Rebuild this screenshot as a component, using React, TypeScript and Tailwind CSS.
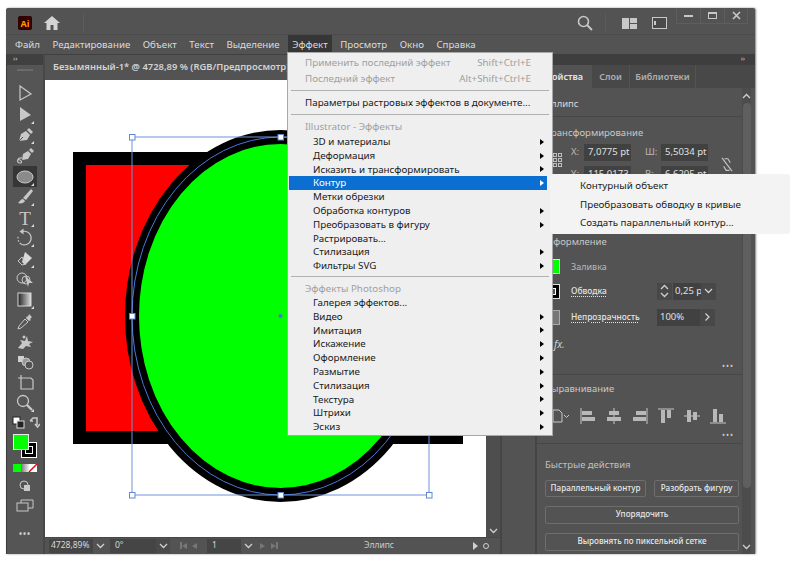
import React from 'react';

const effects = [
  ['3D и материалы', true],
  ['Деформация', true],
  ['Исказить и трансформировать', true],
  ['Контур', true, true],
  ['Метки обрезки', false],
  ['Обработка контуров', true],
  ['Преобразовать в фигуру', true],
  ['Растрировать...', false],
  ['Стилизация', true],
  ['Фильтры SVG', true],
] as [string, boolean, boolean?][];

const photoshop = [
  ['Галерея эффектов...', false],
  ['Видео', true],
  ['Имитация', true],
  ['Искажение', true],
  ['Оформление', true],
  ['Размытие', true],
  ['Стилизация', true],
  ['Текстура', true],
  ['Штрихи', true],
  ['Эскиз', true],
] as [string, boolean, boolean?][];

const menus = ['Файл', 'Редактирование', 'Объект', 'Текст', 'Выделение', 'Эффект', 'Просмотр', 'Окно', 'Справка'];

function MenuRow({ label, arrow, active }: { label: string; arrow: boolean; active?: boolean }) {
  return (
    <div className={`h-[13.8px] ml-px mr-[5px] pl-[24px] pr-[3px] flex items-center justify-between text-[9.8px] leading-none ${active ? 'bg-[#0a6fd0] text-white' : 'text-[#1a1a1a]'}`}>
      <span>{label}</span>
      {arrow && <span className={`w-0 h-0 border-y-[3.5px] border-y-transparent border-l-[4px] ${active ? 'border-l-white' : 'border-l-black'}`} />}
    </div>
  );
}

function Sep() {
  return <div className="h-px mx-[3px] bg-[#b0b0b0]" />;
}

function Corner() {
  return <path d="M19 16v3h-3z" fill="#ddd" />;
}

const tools: React.ReactNode[] = [
  <path key="a" d="M5 2l11 8-11 6z" fill="none" stroke="#c8c8c8" strokeWidth="1.2" />,
  <g key="b"><path d="M5 2l11 8-11 6z" fill="#c8c8c8" /><Corner /></g>,
  <g key="c"><path d="M4 16l2-7 5-3 4 4-3 5z" fill="#c8c8c8" /><path d="M12 5l2-2 4 4-2 2z" fill="#c8c8c8" /><path d="M4 16l4-4" stroke="#535353" /><Corner /></g>,
  <g key="d"><path d="M7 14l1-6 5-3 3 3-3 5z" fill="#c8c8c8" /><path d="M14 4l2-2 3 3-2 2z" fill="#c8c8c8" /><path d="M7 12c-5-1-6 5-2 5 3 0 1-4-2-3" fill="none" stroke="#c8c8c8" strokeWidth="1.1" /></g>,
  <g key="e"><ellipse cx="10" cy="10" rx="8" ry="6" fill="#8a8a8a" stroke="#c8c8c8" /><Corner /></g>,
  <g key="f"><path d="M8 11L16 2l2 2-7 9z" fill="#c8c8c8" /><path d="M8 12c-2 0-3 2-5 4 3 1 6 0 7-2z" fill="#c8c8c8" /><Corner /></g>,
  <g key="g"><text x="10" y="16.5" textAnchor="middle" fontSize="19" fontFamily="Liberation Serif, serif" fill="#c8c8c8">T</text><Corner /></g>,
  <g key="h"><path d="M8 3.4A6.8 6.8 0 1 1 6 16" fill="none" stroke="#c8c8c8" strokeWidth="1.2" /><path d="M6 16A6.8 6.8 0 0 1 3.4 8" fill="none" stroke="#c8c8c8" strokeWidth="1.2" strokeDasharray="1.6 1.6" /><path d="M8.5 0.5v6L4.5 3.5z" fill="#c8c8c8" /><Corner /></g>,
  <g key="i"><path d="M10 3l7 6-7 7-3-3z" fill="#d8d8d8" /><path d="M7 8l-4 4 4 4 4-1z" fill="none" stroke="#c8c8c8" /><Corner /></g>,
  <g key="j"><circle cx="7" cy="8" r="5" fill="none" stroke="#c8c8c8" /><circle cx="11" cy="10" r="4" fill="none" stroke="#c8c8c8" /><path d="M10 6l8 7-4 0-1 4z" fill="#c8c8c8" /></g>,
  <g key="k"><rect x="3" y="3" width="13" height="13" fill="url(#toolgrad)" stroke="#d8d8d8" /><Corner /></g>,
  <g key="l"><path d="M14 3l3 3-2 2 1 1-2 1-3-3 1-2 1 1z" fill="#c8c8c8" /><path d="M10 8l3 3-7 6-3 1 1-3z" fill="none" stroke="#c8c8c8" /></g>,
  <g key="m"><path d="M3 17l4-5-2-3 5 1 2-5 1 5 5 1-4 2 2 3-5-1-3 3z" fill="#c8c8c8" /><circle cx="9" cy="6" r="1.5" fill="#c8c8c8" /></g>,
  <g key="n"><rect x="3" y="4" width="6" height="6" fill="#d0d0d0" /><circle cx="11" cy="10" r="4" fill="#999" stroke="#c8c8c8" /><circle cx="14" cy="13" r="4" fill="#535353" stroke="#c8c8c8" /></g>,
  <g key="o"><path d="M6 2v5M3 5h13l2 2v9H6V5" fill="none" stroke="#c8c8c8" strokeWidth="1.2" /></g>,
  <g key="p"><circle cx="8" cy="8" r="5.5" fill="none" stroke="#c8c8c8" strokeWidth="1.3" /><path d="M12 12l5 5" stroke="#c8c8c8" strokeWidth="2.4" /><Corner /></g>,
];

function Tool({ children, active }: { children: React.ReactNode; active?: boolean }) {
  return (
    <div className={`w-[24px] h-[20.6px] flex items-center justify-center ${active ? 'bg-[#363636]' : ''}`}>
      <svg width="20" height="20" viewBox="0 0 20 20">{children}</svg>
    </div>
  );
}

function Toolbar() {
  return (
    <div className="w-[39px] shrink-0 flex flex-col items-center bg-[#555555] border-l border-[#3c3c3c] border-r-2 border-r-[#484848]">
      <div className="w-full h-[11px] bg-[#404040] text-[#ccc] text-[7px] leading-[10px] pl-[6px]">››</div>
      <div className="w-[16px] h-[2px] mt-[4px] bg-[#6b6b6b]" />
      <svg width="0" height="0" className="absolute">
        <defs>
          <linearGradient id="toolgrad" x1="0" x2="1" y1="0" y2="0">
            <stop offset="0" stopColor="#222" />
            <stop offset="1" stopColor="#ddd" />
          </linearGradient>
          <linearGradient id="modegrad" x1="0" x2="1" y1="0" y2="0">
            <stop offset="0" stopColor="#777" />
            <stop offset="1" stopColor="#f0f0f0" />
          </linearGradient>
        </defs>
      </svg>
      <div className="mt-[13px] flex flex-col items-center">
        {tools.map((t, i) => (
          <Tool key={i} active={i === 4}>{t}</Tool>
        ))}
      </div>
      <svg width="30" height="16" viewBox="0 0 30 16" className="mt-[1px]">
        <rect x="3" y="2" width="7" height="7" fill="#fff" stroke="#222" />
        <rect x="7" y="6" width="7" height="7" fill="#222" stroke="#ddd" />
        <path d="M20 6l3-3h4v7M25 9l2.5 3 2.5-3M20 6h3" fill="none" stroke="#c8c8c8" strokeWidth="1.5" />
      </svg>
      <div className="relative w-[26px] h-[26px] mt-[3px] ml-[2px]">
        <div className="absolute left-[8px] top-[8px] w-[16px] h-[16px] bg-black border border-white flex items-center justify-center">
          <div className="w-[8px] h-[8px] border border-white" />
        </div>
        <div className="absolute left-0 top-0 w-[16px] h-[16px] bg-[#00ff00] border border-[#e8e8e8]" />
      </div>
      <svg width="25" height="9" viewBox="0 0 25 9" className="mt-[4px] ml-[1px]">
        <rect x="0" y="0" width="8" height="8" fill="#00ff00" />
        <rect x="8" y="0" width="8" height="8" fill="url(#modegrad)" />
        <rect x="16" y="0" width="8" height="8" fill="#fff" />
        <path d="M16 8l8-8" stroke="#e01010" strokeWidth="1.5" />
      </svg>
      <svg width="14" height="14" viewBox="0 0 14 14" className="mt-[6px]">
        <circle cx="6" cy="6" r="4" fill="none" stroke="#c8c8c8" />
        <rect x="6" y="6" width="6" height="6" fill="#c8c8c8" />
      </svg>
      <svg width="18" height="14" viewBox="0 0 18 14" className="mt-[6px]">
        <rect x="1" y="4" width="11" height="8" fill="none" stroke="#c8c8c8" />
        <path d="M5 4V1h12v8h-5" fill="none" stroke="#c8c8c8" />
      </svg>
      <div className="mt-[17px] text-[#ccc] text-[8px] leading-none tracking-[1px] font-bold">•••</div>
    </div>
  );
}

function Artwork() {
  return (
    <svg viewBox="45 80 441 457" className="w-[441px] h-[457px] block bg-white">
      <rect x="79.5" y="158.5" width="377" height="279" fill="#ff0000" stroke="#000" strokeWidth="13" />
      <ellipse cx="280.5" cy="316" rx="148.5" ry="179" fill="#00ff00" stroke="#000" strokeWidth="14" />
      <ellipse cx="280.5" cy="316" rx="148.5" ry="179" fill="none" stroke="#4a78d8" strokeWidth="1" />
      <rect x="132" y="137" width="297" height="358" fill="none" stroke="#6f94d8" strokeWidth="1" />
      {[
        [132, 137], [280.5, 137], [429, 137], [132, 316], [429, 316], [132, 495], [280.5, 495], [429, 495],
      ].map(([x, y]) => (
        <rect key={`${x}-${y}`} x={x - 2.5} y={y - 2.5} width="5.5" height="5.5" fill="#fff" stroke="#5f88d8" strokeWidth="1" />
      ))}
      <circle cx="280.5" cy="316" r="2" fill="#4a78d8" />
    </svg>
  );
}

function Chevron({ className = '' }: { className?: string }) {
  return (
    <svg width="9" height="6" viewBox="0 0 9 6" className={className}>
      <path d="M1 1l3.5 3.5L8 1" fill="none" stroke="#d0d0d0" strokeWidth="1.3" />
    </svg>
  );
}

function StatusBar() {
  return (
    <div className="h-[16px] flex items-center bg-[#535353] text-[#d8d8d8] text-[8.5px] leading-none border-t border-[#474747]">
      <div className="ml-[4px] w-[44px] h-[14px] bg-[#454545] flex items-center pl-[2px]">4728,89%</div>
      <div className="w-[14px] flex justify-center"><Chevron /></div>
      <div className="ml-[3px] w-[46px] h-[14px] bg-[#454545] flex items-center pl-[5px]">0°</div>
      <div className="w-[14px] h-[14px] bg-[#4a4a4a] flex items-center justify-center"><Chevron /></div>
      <div className="w-[37px] flex items-center justify-center gap-[5px] text-[#777]">
        <span className="w-[2px] h-[7px] bg-[#777]" />
        <span className="w-0 h-0 border-y-[3.5px] border-y-transparent border-r-[5px] border-r-[#777] ml-[-5px]" />
        <span className="w-0 h-0 border-y-[3.5px] border-y-transparent border-r-[5px] border-r-[#777]" />
      </div>
      <div className="w-[34px] h-[14px] bg-[#454545] flex items-center pl-[5px]">1</div>
      <div className="w-[14px] h-[14px] flex items-center justify-center"><Chevron /></div>
      <div className="ml-[5px] flex items-center gap-[6px]">
        <span className="w-0 h-0 border-y-[3.5px] border-y-transparent border-l-[5px] border-l-[#777]" />
        <span className="w-0 h-0 border-y-[3.5px] border-y-transparent border-l-[5px] border-l-[#777]" />
        <span className="w-[2px] h-[7px] bg-[#777] ml-[-6px]" />
      </div>
      <span className="ml-[86px] text-[#ccc]">Эллипс</span>
      <span className="ml-[79px] w-0 h-0 border-y-[4px] border-y-transparent border-l-[5px] border-l-[#d0d0d0]" />
      <span className="ml-[5px] w-[6px] h-[6px] rounded-full border border-[#d0d0d0]" />
    </div>
  );
}

function Field({ value, className = '' }: { value: string; className?: string }) {
  return <div className={`h-[17px] bg-[#414141] text-[#e0e0e0] text-[9.5px] flex items-center pl-[4px] overflow-hidden whitespace-nowrap ${className}`}>{value}</div>;
}

function AlignIcon({ d, bars }: { d: string; bars: string }) {
  return (
    <svg width="16" height="16" viewBox="0 0 16 16">
      <path d={d} stroke="#c8c8c8" strokeWidth="1" fill="none" />
      <path d={bars} fill="#b8b8b8" />
    </svg>
  );
}

function Panel() {
  return (
    <div className="w-[218px] shrink-0 flex flex-col bg-[#535353] text-[#d0d0d0] text-[9.5px] leading-none">
      <div className="h-[11px] bg-[#3e3e3e] text-[#ccc] text-[7px] leading-[10px] text-right pr-[10px]">››</div>
      <div className="h-[23px] flex items-stretch bg-[#484848] font-semibold text-[9px]">
        <div className="w-[55px] bg-[#535353] flex items-center justify-end pr-[9px] text-[#e8e8e8]">Свойства</div>
        <div className="w-[38px] flex items-center justify-center text-[#b0b0b0] border-r border-[#535353]">Слои</div>
        <div className="w-[66px] flex items-center justify-center text-[#b0b0b0] border-r border-[#535353]">Библиотеки</div>
      </div>
      <div className="flex-1 flex overflow-hidden">
        <div className="w-[205px]">
          <div className="h-[29px] flex items-center pl-[8px] pt-[3px] border-b border-[#474747] text-[#d8d8d8]">Эллипс</div>
          <div className="h-[111px] border-b border-[#474747] pl-[9px]">
            <div className="pt-[11px] text-[#c8c8c8]">Трансформирование</div>
            <div className="mt-[6px] flex">
              <div className="w-[25px] shrink-0 pl-[2px] mt-[9px]">
                <div className="grid grid-cols-[repeat(3,4px)] gap-[1px]">
                  {Array.from({ length: 9 }).map((_, i) => (
                    <span key={i} className="w-[4px] h-[4px] border border-[#c0c0c0]" />
                  ))}
                </div>
              </div>
              <div>
                <div className="flex items-center h-[17px]">
                  <span className="w-[13px] text-[#b8b8b8]">X:</span>
                  <Field value="7,0775 pt" className="w-[47px]" />
                  <span className="ml-[14px] w-[16px] text-[#b8b8b8]">Ш:</span>
                  <Field value="5,5034 pt" className="w-[47px]" />
                </div>
                <div className="flex items-center h-[17px] mt-[5px]">
                  <span className="w-[13px] text-[#b8b8b8]">Y:</span>
                  <Field value="115,0173 pt" className="w-[47px]" />
                  <span className="ml-[14px] w-[16px] text-[#b8b8b8]">В:</span>
                  <Field value="6,6205 pt" className="w-[47px]" />
                </div>
              </div>
              <svg width="12" height="15" viewBox="0 0 14 18" className="ml-[13px] mt-[13px]">
                <path d="M4 2h4l3 5M10 16H6L3 11M1 1l12 16" fill="none" stroke="#c8c8c8" strokeWidth="1.3" />
              </svg>
            </div>
          </div>
          <div className="h-[147px] border-b border-[#474747] pl-[8px]">
            <div className="pt-[9px] text-[#c8c8c8] pl-[1px]">Оформление</div>
            <div className="mt-[12px] flex items-center h-[15px]">
              <div className="w-[15px] h-[15px] bg-[#00ff00] border border-[#e0e0e0]" />
              <span className="ml-[11px] text-[#b8b8b8] text-[9px]">Заливка</span>
            </div>
            <div className="mt-[10px] flex items-center h-[15px] relative">
              <div className="w-[15px] h-[15px] bg-black border border-[#e0e0e0] flex items-center justify-center">
                <div className="w-[7px] h-[7px] bg-[#535353] border border-white" />
              </div>
              <span className="ml-[11px] text-[8.4px] font-medium text-[#e4e4e4] underline decoration-dotted underline-offset-2">Обводка</span>
              <div className="absolute left-[112px] top-[-1px] flex h-[17px]">
                <div className="w-[15px] bg-[#484848] flex flex-col items-center justify-center gap-[2px]">
                  <Chevron className="rotate-180" />
                  <Chevron />
                </div>
                <Field value="0,25 p" className="w-[28px] ml-px !pl-[2px]" />
                <div className="w-[15px] bg-[#484848] flex items-center justify-center"><Chevron /></div>
              </div>
            </div>
            <div className="mt-[11px] flex items-center h-[15px] relative">
              <div className="w-[15px] h-[15px] bg-[#777] border border-[#aaa]" />
              <span className="ml-[11px] text-[8.4px] font-medium text-[#e4e4e4] underline decoration-dotted underline-offset-2">Непрозрачность</span>
              <div className="absolute left-[112px] top-[-1px] flex h-[17px]">
                <Field value="100%" className="w-[43px] !pl-[3px]" />
                <div className="w-[15px] bg-[#484848] flex items-center justify-center">
                  <Chevron className="-rotate-90" />
                </div>
              </div>
            </div>
            <div className="mt-[14px] pl-[9px] text-[10px] italic">fx.</div>
            <div className="mt-[13px] text-right pr-[8px] text-[8px] tracking-[1px] text-[#ccc]">•••</div>
          </div>
          <div className="h-[69px] border-b border-[#474747] pl-[8px]">
            <div className="pt-[9px] text-[#c8c8c8]">Выравнивание</div>
            <div className="mt-[14px] flex items-center gap-[10px] pl-[7px]">
              <svg width="18" height="16" viewBox="0 0 18 16" className="mr-0">
                <path d="M1 2h6l3 3v9H1z" fill="none" stroke="#c8c8c8" />
                <path d="M12 7l2.5 2.5L17 7" fill="none" stroke="#c8c8c8" />
              </svg>
              <AlignIcon d="M1 0v16" bars="M2 3h10v4H2zM2 9h13v4H2z" />
              <AlignIcon d="M8 0v16" bars="M3 3h10v4H3zM1 9h14v4H1z" />
              <AlignIcon d="M15 0v16" bars="M4 3h10v4H4zM1 9h13v4H1z" />
              <AlignIcon d="M0 1h16" bars="M3 2h4v13H3zM9 2h4v8H9z" />
              <AlignIcon d="M0 8h16" bars="M3 2h4v12H3zM9 4h4v8H9z" />
              <AlignIcon d="M0 15h16" bars="M3 1h4v13H3zM9 6h4v8H9z" />
            </div>
            <div className="mt-[7px] text-right pr-[8px] text-[8px] tracking-[1px] text-[#ccc]">•••</div>
          </div>
          <div className="pl-[8px] pr-[3px]">
            <div className="pt-[16px] text-[#c0c0c0]">Быстрые действия</div>
            <div className="mt-[10px] flex gap-[8px] font-medium text-[#e8e8e8] text-[8.1px]">
              <div className="w-[101px] h-[17px] border border-[#6e6e6e] rounded-[2px] flex items-center justify-center whitespace-nowrap">Параллельный контур</div>
              <div className="w-[85px] h-[17px] border border-[#6e6e6e] rounded-[2px] flex items-center justify-center whitespace-nowrap">Разобрать фигуру</div>
            </div>
            <div className="mt-[9px] h-[18px] border border-[#6e6e6e] rounded-[2px] flex items-center justify-center font-medium text-[#e8e8e8] text-[8.1px]">Упорядочить</div>
            <div className="mt-[9px] h-[18px] border border-[#6e6e6e] rounded-[2px] flex items-center justify-center font-medium text-[#e8e8e8] text-[8.1px]">Выровнять по пиксельной сетке</div>
          </div>
        </div>
        <div className="w-[9px] flex flex-col items-center bg-[#4c4c4c] ml-0 pt-[5px]">
          <Chevron className="rotate-180" />
          <div className="w-[8px] h-[385px] mt-[4px] bg-[#5f5f5f] rounded-[4px]" />
          <Chevron className="mt-[56px]" />
        </div>
      </div>
    </div>
  );
}

export default function App() {
  return (
    <div className="w-[800px] h-[563px] overflow-hidden bg-white pt-[8px] pl-[6px] font-['Noto_Sans','Liberation_Sans',sans-serif]">
      <div className="relative w-[749px] h-[546px] flex flex-col bg-[#535353] rounded-t-[2px] shadow-[1px_0_2px_rgba(0,0,0,0.5)]">
        {/* title bar */}
        <div className="h-[26px] flex items-center pl-[12px] pt-[4px] relative">
          <div className="w-[14px] h-[14px] bg-[#330000] rounded-[2px] flex items-center justify-center text-[#ff9a00] text-[9px] font-bold leading-none">Ai</div>
          <svg width="16" height="14" viewBox="0 0 16 14" className="ml-[12px]">
            <path d="M8 0L0 7h2.5v7h4V9h3v5h4V7H16z" fill="#d4d4d4" />
          </svg>
          <div className="ml-[23px] w-px h-[18px] bg-[#5c5c5c]" />
          <svg width="16" height="16" viewBox="0 0 16 16" className="ml-[493px]">
            <circle cx="6.5" cy="6.5" r="5" fill="none" stroke="#c8c8c8" strokeWidth="1.6" />
            <path d="M10 10l5 5" stroke="#c8c8c8" strokeWidth="2" />
          </svg>
          <div className="ml-[12px] w-px h-[18px] bg-[#5c5c5c]" />
          <svg width="15" height="11" viewBox="0 0 15 11" className="ml-[16px]">
            <path d="M0 0h7v11H0zM8 0h7v5H8zM8 6h7v5H8z" fill="#c8c8c8" />
          </svg>
          <svg width="15" height="12" viewBox="0 0 15 12" className="ml-[15px]">
            <rect x="0.5" y="0.5" width="14" height="11" fill="#4a4a4a" stroke="#c8c8c8" />
            <rect x="2" y="4" width="2" height="4" fill="#c8c8c8" />
          </svg>
          <div className="ml-auto self-start -mt-[4px] flex h-[16px] mr-[7px] border border-t-0 border-[#5e5e5e]">
            <div className="w-[24px] flex items-center justify-center border-r border-[#5e5e5e]"><span className="w-[9px] h-[2px] bg-[#c8c8c8]" /></div>
            <div className="w-[24px] flex items-center justify-center border-r border-[#5e5e5e]"><span className="w-[9px] h-[7px] border border-t-2 border-[#c8c8c8]" /></div>
            <div className="w-[22px] flex items-center justify-center">
              <svg width="9" height="9" viewBox="0 0 9 9"><path d="M1 1l7 7M8 1L1 8" stroke="#c8c8c8" strokeWidth="1.6" /></svg>
            </div>
          </div>
        </div>
        {/* menu bar */}
        <div className="h-[20px] flex items-center gap-[4.5px] pl-[5px] border-t border-[#4b4b4b] text-[#dcdcdc] text-[9.7px] leading-none">
          {menus.map((m) => (
            <span key={m} className={`px-[4px] h-[19px] flex items-center ${m === 'Эффект' ? 'bg-[#363636]' : ''}`}>{m}</span>
          ))}
        </div>
        {/* body */}
        <div className="flex-1 flex min-h-0">
          <Toolbar />
          <div className="w-[455px] shrink-0 flex flex-col">
            <div className="h-[26px] flex items-center pl-[8px] border-t border-[#404040] bg-[#535353] text-[#d4d4d4] text-[9.4px] font-semibold whitespace-nowrap overflow-hidden">
              Безымянный-1* @ 4728,89 % (RGB/Предпросмотр)
            </div>
            <div className="flex h-[457px]">
              <Artwork />
              <div className="w-[14px] bg-[#4e4e4e] flex flex-col items-center justify-end pb-[3px]"><Chevron /></div>
            </div>
            <StatusBar />
          </div>
          <div className="w-[37px] shrink-0 bg-[#535353] border-x-2 border-[#454545]" />
          <Panel />
        </div>

        {/* Effect menu */}
        <div className="absolute left-[281px] top-[44px] w-[266px] h-[384px] bg-[#efefef] border border-[#a8a8a8] pt-[2px]">
          <div className="h-[16px] pl-[17px] pr-[21px] flex items-center justify-between text-[9.8px] leading-none text-[#a0a0a0]"><span>Применить последний эффект</span><span>Shift+Ctrl+E</span></div>
          <div className="h-[16px] pl-[17px] pr-[21px] flex items-center justify-between text-[9.8px] leading-none text-[#a0a0a0]"><span>Последний эффект</span><span>Alt+Shift+Ctrl+E</span></div>
          <div className="mt-[3px]"><Sep /></div>
          <div className="mt-[4px] h-[16px] pl-[17px] flex items-center text-[9.8px] leading-none text-[#1a1a1a]">Параметры растровых эффектов в документе...</div>
          <div className="mt-[3px]"><Sep /></div>
          <div className="mt-[4px] h-[16px] pl-[17px] flex items-center text-[9.8px] leading-none text-[#a0a0a0]">Illustrator - Эффекты</div>
          {effects.map(([label, arrow, active]) => (
            <MenuRow key={label} label={label} arrow={arrow} active={active} />
          ))}
          <div className="mt-[3px]"><Sep /></div>
          <div className="mt-[4px] h-[16px] pl-[17px] flex items-center text-[9.8px] leading-none text-[#a0a0a0]">Эффекты Photoshop</div>
          <div className="mt-[-1px]">
            {photoshop.map(([label, arrow]) => (
              <MenuRow key={label} label={label} arrow={arrow} />
            ))}
          </div>
        </div>

        {/* flyout */}
        <div className="absolute left-[544px] top-[166px] w-[240px] h-[60px] bg-[#f3f3f3] rounded-[3px] pl-[30px] flex flex-col justify-center gap-[3.5px] text-[9.8px] leading-[15px] text-[#1a1a1a] whitespace-nowrap">
          <div>Контурный объект</div>
          <div>Преобразовать обводку в кривые</div>
          <div>Создать параллельный контур...</div>
        </div>
      </div>
    </div>
  );
}
